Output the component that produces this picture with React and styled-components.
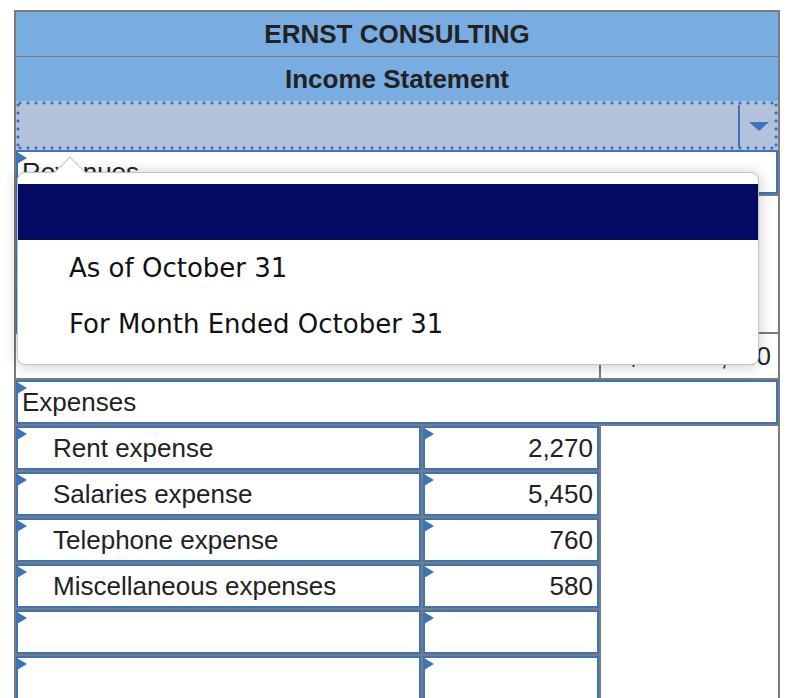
import React from 'react';
import styled, { createGlobalStyle } from 'styled-components';

const GRAY = '#7b7b7b';
const BLUE = '#3c74b9';
const HEAD = '#79ade1';

const GlobalStyle = createGlobalStyle`
  html, body { overflow: hidden; }
  body {
    margin: 0;
    background: #fff;
    font-family: "Liberation Sans", Arial, sans-serif;
  }
`;

const Page = styled.div`
  position: relative;
  padding: 10px 0 0 14px;
`;

const Sheet = styled.div`
  width: 766px;
  box-sizing: border-box;
  border: 2px solid ${GRAY};
  border-bottom: none;
`;

const Title = styled.div`
  height: ${(p) => p.$h}px;
  background: ${HEAD};
  display: flex;
  align-items: center;
  justify-content: center;
  font-weight: bold;
  font-size: 26px;
  color: #222;
  border-bottom: ${(p) => (p.$line ? `1px solid ${GRAY}` : 'none')};
`;

const dot = `radial-gradient(circle at center, ${BLUE} 1.3px, transparent 1.8px)`;

const SelectBar = styled.div`
  height: 49px;
  display: flex;
  justify-content: flex-end;
  background:
    ${dot} 0 0 / 8px 4px repeat-x,
    ${dot} 0 100% / 8px 4px repeat-x,
    ${dot} 0 0 / 4px 8px repeat-y,
    ${dot} 100% 0 / 4px 8px repeat-y,
    #b1c2da;
`;

const DropButton = styled.div`
  width: 38px;
  margin: 4px 0 3px;
  border-left: 2px solid ${BLUE};
  display: flex;
  align-items: center;
  justify-content: center;
`;

const Grid = styled.div`
  display: grid;
  grid-template-columns: 405px 176px 177px;
  grid-auto-rows: 44px;
  gap: 2px;
  background: ${GRAY};
`;

const Field = styled.div`
  position: relative;
  box-sizing: border-box;
  grid-column: ${(p) => (p.$col === 'full' ? '1 / -1' : p.$col === 'amount' ? '2' : '1')};
  background: #fff;
  border: 2px solid ${BLUE};
  display: flex;
  align-items: center;
  justify-content: ${(p) => (p.$right ? 'flex-end' : 'flex-start')};
  padding: 0 ${(p) => (p.$right ? 4 : 0)}px 0 ${(p) => p.$indent ?? 4}px;
  font-size: 26px;
  color: #222;
  white-space: nowrap;

  &::before {
    content: '';
    position: absolute;
    left: -1px;
    top: 0;
    border-left: 10px solid ${BLUE};
    border-top: 6px solid transparent;
    border-bottom: 6px solid transparent;
  }
`;

const SideCell = styled.div`
  grid-column: 3;
  grid-row: span ${(p) => p.$span};
  background: #fff;
`;

const PlainCell = styled.div`
  grid-column: 1 / span 2;
  background: #fff;
`;

const TotalCell = styled.div`
  grid-column: 3;
  background: #fff;
  display: flex;
  align-items: center;
  justify-content: space-between;
  padding: 0 7px 0 25px;
  font-size: 26px;
  color: #222;
`;

const Popup = styled.div`
  position: absolute;
  left: 17px;
  top: 172px;
  z-index: 10;
  width: 740px;
  padding: 11px 0 12px;
  background: #fff;
  border: 1px solid #c4c4c4;
  border-radius: 8px;
  box-shadow: 0 1px 14px rgba(0, 0, 0, 0.22);
  font-family: "DejaVu Sans", Verdana, sans-serif;

  &::before {
    content: '';
    position: absolute;
    z-index: 0;
    left: 41px;
    top: -12px;
    width: 22px;
    height: 22px;
    box-sizing: border-box;
    background: #fff;
    border-top: 1px solid #c4c4c4;
    border-left: 1px solid #c4c4c4;
    transform: rotate(45deg);
  }
`;

const Options = styled.ul`
  position: relative;
  z-index: 1;
  list-style: none;
  margin: 0;
  padding: 0;
`;

const Option = styled.li`
  height: 56px;
  display: flex;
  align-items: center;
  padding-left: 51px;
  font-size: 26px;
  color: #111;
  background: ${(p) => (p.$active ? '#050a63' : 'transparent')};
`;

const revenueRows = 3;
const expenses = [
  ['Rent expense', '2,270'],
  ['Salaries expense', '5,450'],
  ['Telephone expense', '760'],
  ['Miscellaneous expenses', '580'],
  ['', ''],
  ['', ''],
  ['', ''],
];

export default function App() {
  return (
    <Page>
      <GlobalStyle />
      <Sheet>
        <Title $h={44} $line>ERNST CONSULTING</Title>
        <Title $h={44}>Income Statement</Title>
        <SelectBar>
          <DropButton>
            <svg width="20" height="9" viewBox="0 0 20 9">
              <path d="M0 0H20L10 9Z" fill={BLUE} />
            </svg>
          </DropButton>
        </SelectBar>
        <Grid>
          <Field $col="full">Revenues</Field>
          {Array.from({ length: revenueRows }).map((_, i) => (
            <React.Fragment key={`r${i}`}>
              <Field $col="label" $indent={35} />
              <Field $col="amount" $right />
              {i === 0 && <SideCell $span={revenueRows} />}
            </React.Fragment>
          ))}
          <PlainCell />
          <TotalCell>
            <span>$</span>
            <span>12,640</span>
          </TotalCell>
          <Field $col="full">Expenses</Field>
          {expenses.map(([label, amount], i) => (
            <React.Fragment key={`e${i}`}>
              <Field $col="label" $indent={35}>{label}</Field>
              <Field $col="amount" $right>{amount}</Field>
              {i === 0 && <SideCell $span={expenses.length} />}
            </React.Fragment>
          ))}
        </Grid>
      </Sheet>
      <Popup>
        <Options>
          <Option $active />
          <Option>As of October 31</Option>
          <Option>For Month Ended October 31</Option>
        </Options>
      </Popup>
    </Page>
  );
}
